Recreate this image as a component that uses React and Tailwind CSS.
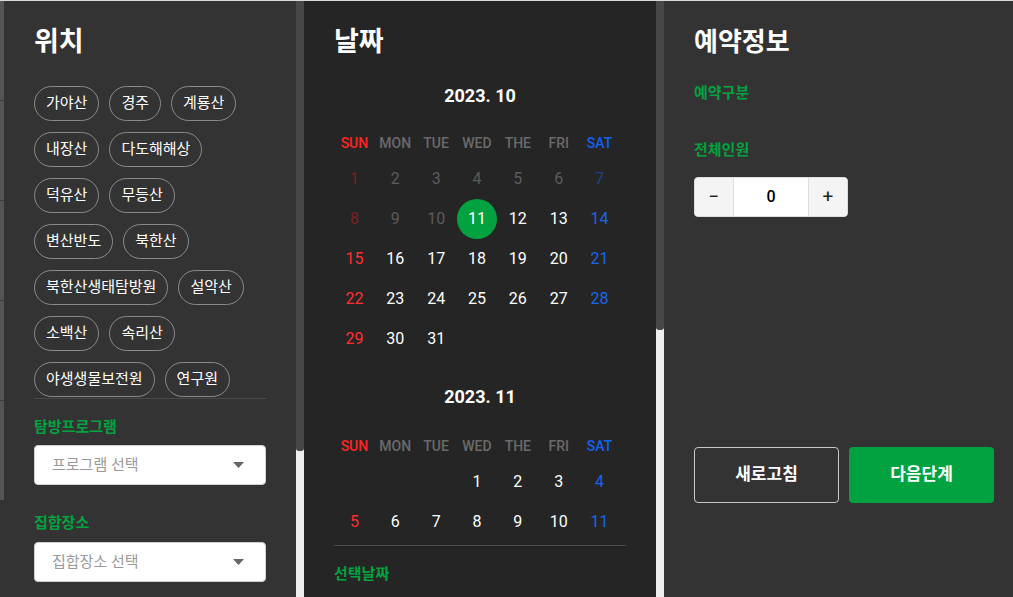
import React from 'react';

const places = [
  '가야산', '경주', '계룡산', '내장산', '다도해해상', '덕유산', '무등산', '변산반도', '북한산',
  '북한산생태탐방원', '설악산', '소백산', '속리산', '야생생물보전원', '연구원',
];

const weekdays = ['SUN', 'MON', 'TUE', 'WED', 'THE', 'FRI', 'SAT'];

// 0 = empty cell
const october = [
  [1, 2, 3, 4, 5, 6, 7],
  [8, 9, 10, 11, 12, 13, 14],
  [15, 16, 17, 18, 19, 20, 21],
  [22, 23, 24, 25, 26, 27, 28],
  [29, 30, 31, 0, 0, 0, 0],
];

// only the rows visible in the panel
const november = [
  [0, 0, 0, 1, 2, 3, 4],
  [5, 6, 7, 8, 9, 10, 11],
];

const dayColor = (col, past) => {
  if (past) {
    if (col === 0) return 'text-[#7a2222]';
    if (col === 6) return 'text-[#1f4580]';
    return 'text-[#5c5c5c]';
  }
  if (col === 0) return 'text-[#ff2f2f]';
  if (col === 6) return 'text-[#1766e8]';
  return 'text-white';
};

const Month = ({ title, weeks, isCurrent, gap }) => (
  <div>
    <div className="text-center text-[18px] font-bold leading-[24px] text-white">{title}</div>
    <div className={`${gap} grid w-[286px] grid-cols-7`}>
      {weekdays.map((w, i) => (
        <div
          key={w}
          className={`flex h-[30px] items-center justify-center text-[14px] font-medium ${
            i === 0 ? 'text-[#ff2424]' : i === 6 ? 'text-[#1162f2]' : 'text-[#6a6a6a]'
          }`}
        >
          {w}
        </div>
      ))}
    </div>
    <div className="grid w-[286px] grid-cols-7 pt-[1px]">
      {weeks.flat().map((d, i) => {
        const col = i % 7;
        const past = isCurrent && d < 11;
        const selected = isCurrent && d === 11;
        return (
          <div key={i} className="flex h-[40px] items-center justify-center">
            {d === 0 ? null : selected ? (
              <span className="flex h-10 w-10 items-center justify-center rounded-full bg-[#01a23f] text-[16px] text-white">
                {d}
              </span>
            ) : (
              <span className={`text-[16px] ${dayColor(col, past)}`}>{d}</span>
            )}
          </div>
        );
      })}
    </div>
  </div>
);

const SelectBox = ({ placeholder }) => (
  <div className="flex h-[40px] w-[232px] items-center justify-between rounded-[4px] border border-[#d0d0d0] bg-white pl-[17px] pr-[21px]">
    <span className="text-[15px] text-[#9a9a9a]">{placeholder}</span>
    <svg width="11" height="6" viewBox="0 0 11 6">
      <polygon points="0,0 11,0 5.5,6" fill="#666" />
    </svg>
  </div>
);

const Scrollbar = ({ thumb }) => (
  <div className="flex w-2 flex-col bg-[#eeeeee]">
    <div className={`${thumb} rounded-b-[3px] bg-[#474747]`} />
  </div>
);

export default function App() {
  return (
    <div
      className="flex h-[597px] w-[1013px] flex-col overflow-hidden bg-[#333333]"
      style={{ fontFamily: 'Roboto, "Noto Sans CJK KR", sans-serif' }}
    >
      <div className="h-px bg-[#d6dddc]" />
      <div className="flex flex-1">
        {/* left edge strip */}
        <div className="flex w-[4px] flex-col">
          <div className="h-[100px] border-b border-[#404040] bg-[#555555]" />
          <div className="h-[100px] border-b border-[#404040] bg-[#555555]" />
          <div className="h-[100px] border-b border-[#404040] bg-[#555555]" />
          <div className="h-[100px] border-b border-[#404040] bg-[#555555]" />
          <div className="h-[99px] bg-[#555555]" />
        </div>

        {/* 위치 */}
        <div className="w-[292px] bg-[#333333] px-[30px] pt-[23px]">
          <h2 className="text-[27px] font-bold leading-[36px] text-white">위치</h2>
          <div className="mt-[26px] flex w-[232px] flex-wrap gap-y-[11px]">
            {places.map((p) => (
              <span
                key={p}
                className="mr-[10px] rounded-full border border-[#8a8a8a] px-[11px] py-[6px] text-[15px] leading-[21px] text-white"
              >
                {p}
              </span>
            ))}
          </div>
          <div className="mt-[1px] border-t border-[#4a4a4a]" />
          <div className="mt-[18px] text-[15px] font-bold leading-[20px] text-[#01a23f]">탐방프로그램</div>
          <div className="mt-[8px]">
            <SelectBox placeholder="프로그램 선택" />
          </div>
          <div className="mt-[28px] text-[15px] font-bold leading-[20px] text-[#01a23f]">집합장소</div>
          <div className="mt-[9px]">
            <SelectBox placeholder="집합장소 선택" />
          </div>
        </div>

        <Scrollbar thumb="h-[450px]" />

        {/* 날짜 */}
        <div className="w-[352px] bg-[#252525] px-[30px] pt-[23px]">
          <h2 className="text-[27px] font-bold leading-[36px] text-white">날짜</h2>
          <div className="mt-[24px]">
            <Month title="2023. 10" weeks={october} isCurrent gap="mt-[20px]" />
            <div className="mt-[26px]">
              <Month title="2023. 11" weeks={november} gap="mt-[22px]" />
            </div>
          </div>
          <div className="mt-[3px] border-t border-[#4a4a4a]" />
          <div className="mt-[18px] text-[15px] font-bold leading-[20px] text-[#01a23f]">선택날짜</div>
        </div>

        <Scrollbar thumb="h-[329px]" />

        {/* 예약정보 */}
        <div className="flex-1 bg-[#333333] pl-[30px] pt-[23px]">
          <h2 className="text-[26px] font-bold leading-[36px] text-white">예약정보</h2>
          <div className="mt-[23px] text-[15px] font-bold leading-[20px] text-[#01a23f]">예약구분</div>
          <div className="mt-[37px] text-[15px] font-bold leading-[20px] text-[#01a23f]">전체인원</div>
          <div className="mt-[17px] flex h-[40px] w-[154px] overflow-hidden rounded-[4px] border border-[#dddddd] bg-white">
            <button className="flex w-[39px] items-center justify-center border-r border-[#dddddd] bg-[#f4f4f4] text-[19px] text-[#222]">
              −
            </button>
            <div className="flex flex-1 items-center justify-center text-[16px] font-medium text-black">0</div>
            <button className="flex w-[39px] items-center justify-center border-l border-[#dddddd] bg-[#f4f4f4] text-[19px] text-[#222]">
              +
            </button>
          </div>
          <div className="mt-[230px] flex gap-[10px]">
            <button className="h-[56px] w-[145px] rounded-[4px] border border-[#c8c8c8] text-[17px] font-bold text-white">
              새로고침
            </button>
            <button className="h-[56px] w-[145px] rounded-[4px] bg-[#01a23f] text-[17px] font-bold text-white">
              다음단계
            </button>
          </div>
        </div>
      </div>
    </div>
  );
}
